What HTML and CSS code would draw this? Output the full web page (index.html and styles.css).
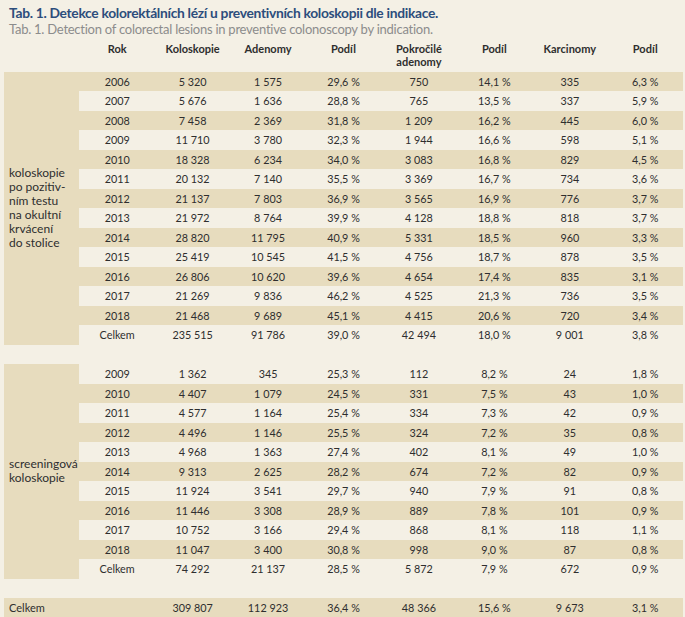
FILE: index.html
```html
<!DOCTYPE html>
<html lang="cs">
<head>
<meta charset="utf-8">
<title>Tab. 1</title>
<link rel="stylesheet" href="styles.css">
</head>
<body>
<div class="caption">
  <div class="title">Tab. 1. Detekce kolorektálních lézí u preventivních koloskopii dle indikace.</div>
  <div class="subtitle">Tab. 1. Detection of colorectal lesions in preventive colonoscopy by indication.</div>
</div>
<table class="data">
  <colgroup>
    <col><col><col><col><col><col><col><col><col>
  </colgroup>
  <thead>
    <tr>
      <th></th><th>Rok</th><th>Koloskopie</th><th>Adenomy</th><th>Podíl</th><th>Pokročilé<br>adenomy</th><th>Podíl</th><th>Karcinomy</th><th>Podíl</th>
    </tr>
  </thead>
  <tbody>
    <tr class="dark"><td class="label" rowspan="14">koloskopie<br>po pozitiv-<br>ním testu<br>na okultní<br>krvácení<br>do stolice</td><td>2006</td><td>5 320</td><td>1 575</td><td>29,6 %</td><td>750</td><td>14,1 %</td><td>335</td><td>6,3 %</td></tr>
    <tr class="light"><td>2007</td><td>5 676</td><td>1 636</td><td>28,8 %</td><td>765</td><td>13,5 %</td><td>337</td><td>5,9 %</td></tr>
    <tr class="dark"><td>2008</td><td>7 458</td><td>2 369</td><td>31,8 %</td><td>1 209</td><td>16,2 %</td><td>445</td><td>6,0 %</td></tr>
    <tr class="light"><td>2009</td><td>11 710</td><td>3 780</td><td>32,3 %</td><td>1 944</td><td>16,6 %</td><td>598</td><td>5,1 %</td></tr>
    <tr class="dark"><td>2010</td><td>18 328</td><td>6 234</td><td>34,0 %</td><td>3 083</td><td>16,8 %</td><td>829</td><td>4,5 %</td></tr>
    <tr class="light"><td>2011</td><td>20 132</td><td>7 140</td><td>35,5 %</td><td>3 369</td><td>16,7 %</td><td>734</td><td>3,6 %</td></tr>
    <tr class="dark"><td>2012</td><td>21 137</td><td>7 803</td><td>36,9 %</td><td>3 565</td><td>16,9 %</td><td>776</td><td>3,7 %</td></tr>
    <tr class="light"><td>2013</td><td>21 972</td><td>8 764</td><td>39,9 %</td><td>4 128</td><td>18,8 %</td><td>818</td><td>3,7 %</td></tr>
    <tr class="dark"><td>2014</td><td>28 820</td><td>11 795</td><td>40,9 %</td><td>5 331</td><td>18,5 %</td><td>960</td><td>3,3 %</td></tr>
    <tr class="light"><td>2015</td><td>25 419</td><td>10 545</td><td>41,5 %</td><td>4 756</td><td>18,7 %</td><td>878</td><td>3,5 %</td></tr>
    <tr class="dark"><td>2016</td><td>26 806</td><td>10 620</td><td>39,6 %</td><td>4 654</td><td>17,4 %</td><td>835</td><td>3,1 %</td></tr>
    <tr class="light"><td>2017</td><td>21 269</td><td>9 836</td><td>46,2 %</td><td>4 525</td><td>21,3 %</td><td>736</td><td>3,5 %</td></tr>
    <tr class="dark"><td>2018</td><td>21 468</td><td>9 689</td><td>45,1 %</td><td>4 415</td><td>20,6 %</td><td>720</td><td>3,4 %</td></tr>
    <tr class="light"><td>Celkem</td><td>235 515</td><td>91 786</td><td>39,0 %</td><td>42 494</td><td>18,0 %</td><td>9 001</td><td>3,8 %</td></tr>
    <tr class="gap"><td colspan="9"></td></tr>
    <tr class="light"><td class="label" rowspan="11">screeningová<br>koloskopie</td><td>2009</td><td>1 362</td><td>345</td><td>25,3 %</td><td>112</td><td>8,2 %</td><td>24</td><td>1,8 %</td></tr>
    <tr class="dark"><td>2010</td><td>4 407</td><td>1 079</td><td>24,5 %</td><td>331</td><td>7,5 %</td><td>43</td><td>1,0 %</td></tr>
    <tr class="light"><td>2011</td><td>4 577</td><td>1 164</td><td>25,4 %</td><td>334</td><td>7,3 %</td><td>42</td><td>0,9 %</td></tr>
    <tr class="dark"><td>2012</td><td>4 496</td><td>1 146</td><td>25,5 %</td><td>324</td><td>7,2 %</td><td>35</td><td>0,8 %</td></tr>
    <tr class="light"><td>2013</td><td>4 968</td><td>1 363</td><td>27,4 %</td><td>402</td><td>8,1 %</td><td>49</td><td>1,0 %</td></tr>
    <tr class="dark"><td>2014</td><td>9 313</td><td>2 625</td><td>28,2 %</td><td>674</td><td>7,2 %</td><td>82</td><td>0,9 %</td></tr>
    <tr class="light"><td>2015</td><td>11 924</td><td>3 541</td><td>29,7 %</td><td>940</td><td>7,9 %</td><td>91</td><td>0,8 %</td></tr>
    <tr class="dark"><td>2016</td><td>11 446</td><td>3 308</td><td>28,9 %</td><td>889</td><td>7,8 %</td><td>101</td><td>0,9 %</td></tr>
    <tr class="light"><td>2017</td><td>10 752</td><td>3 166</td><td>29,4 %</td><td>868</td><td>8,1 %</td><td>118</td><td>1,1 %</td></tr>
    <tr class="dark"><td>2018</td><td>11 047</td><td>3 400</td><td>30,8 %</td><td>998</td><td>9,0 %</td><td>87</td><td>0,8 %</td></tr>
    <tr class="light"><td>Celkem</td><td>74 292</td><td>21 137</td><td>28,5 %</td><td>5 872</td><td>7,9 %</td><td>672</td><td>0,9 %</td></tr>
    <tr class="gap"><td colspan="9"></td></tr>
    <tr class="dark total"><td class="label">Celkem</td><td></td><td>309 807</td><td>112 923</td><td>36,4 %</td><td>48 366</td><td>15,6 %</td><td>9 673</td><td>3,1 %</td></tr>
  </tbody>
</table>
</body>
</html>
```

FILE: styles.css
```css
html, body {
  margin: 0;
  padding: 0;
  background: #f4f0e5;
}

body {
  font-family: Lato, "Open Sans", sans-serif;
  color: #2e2e2e;
}

.caption {
  padding: 5px 0 0 9px;
}

.title {
  font-size: 13.8px;
  line-height: 16px;
  font-weight: 700;
  color: #2c4d7c;
  letter-spacing: -0.3px;
}

.subtitle {
  font-size: 13px;
  line-height: 16px;
  color: #8c8c8c;
  letter-spacing: -0.25px;
}

.data {
  margin-left: 4px;
  width: 679px;
  border-collapse: collapse;
  table-layout: fixed;
  font-size: 10.8px;
}

.data col {
  width: 75.44px;
}

.data th {
  font-weight: 700;
  font-size: 11px;
  line-height: 13px;
  text-align: center;
  vertical-align: top;
  padding: 5px 0 3px;
  height: 34.5px;
  box-sizing: border-box;
  white-space: nowrap;
  color: #2e2e2e;
}

.data td {
  height: 19.5px;
  padding: 0;
  text-align: center;
  vertical-align: middle;
  white-space: nowrap;
  line-height: 13px;
}

.data tr.dark td {
  background: #e7dcbe;
}

.data tr.light td,
.data tr.gap td {
  background: #f4f0e5;
}

.data td.label {
  background: #e7dcbe !important;
  text-align: left;
  padding-left: 5px;
  font-size: 12px;
  line-height: 14px;
}

.data tr.total td.label {
  font-size: 11px;
}
```
